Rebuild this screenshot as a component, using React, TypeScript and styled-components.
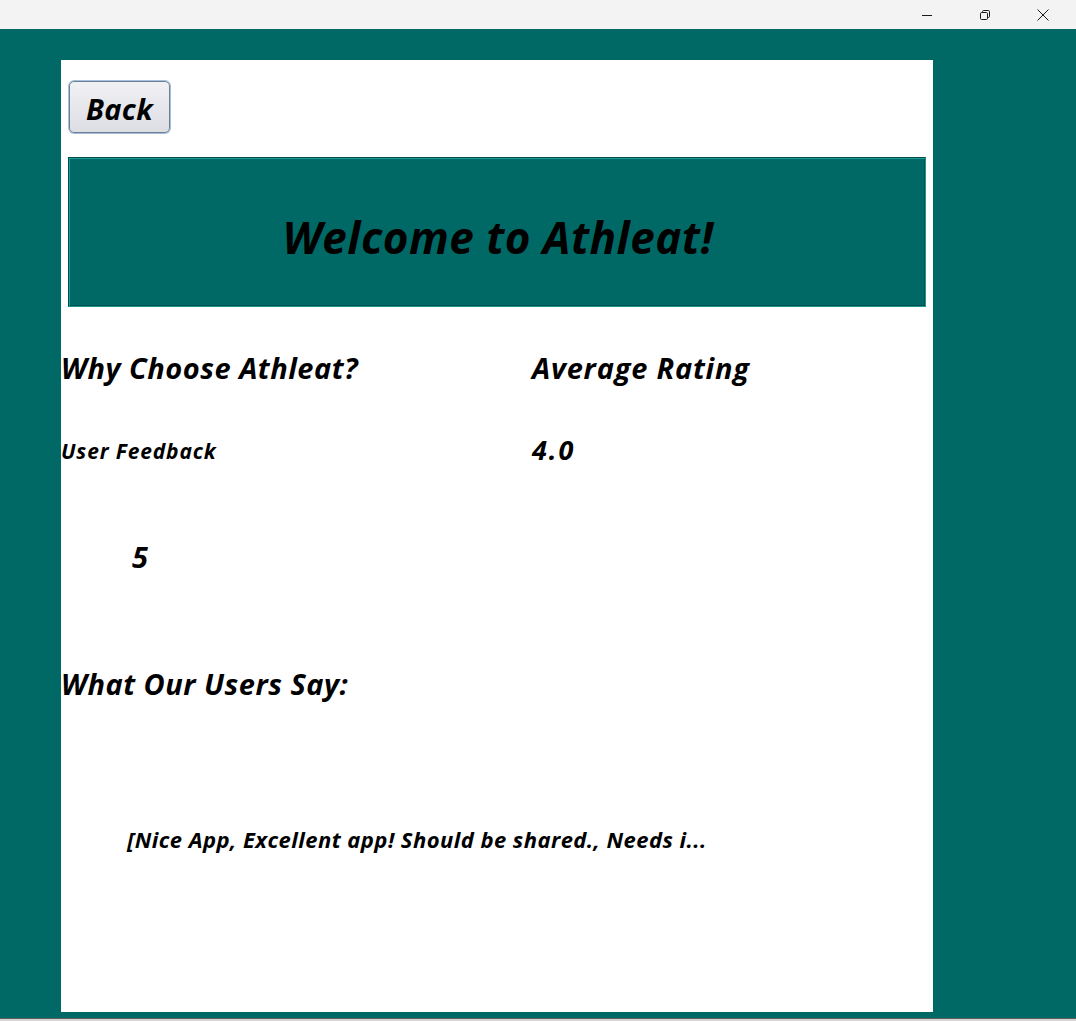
import React from 'react';
import styled, { createGlobalStyle } from 'styled-components';

const teal = '#006966';

const GlobalStyle = createGlobalStyle`
  html, body {
    margin: 0;
    padding: 0;
    background: ${teal};
  }
  body {
    font-family: "Open Sans", "Noto Sans", sans-serif;
  }
`;

const Window = styled.div`
  width: 1076px;
  height: 1021px;
  display: flex;
  flex-direction: column;
  overflow: hidden;
`;

const TitleBar = styled.div`
  height: 29px;
  background: #f3f3f3;
  display: flex;
  justify-content: flex-end;
  padding-right: 4px;
  flex-shrink: 0;
`;

const ControlButton = styled.div`
  width: 58px;
  height: 29px;
  display: flex;
  align-items: center;
  justify-content: center;
  color: #1a1a1a;
`;

const Stage = styled.div`
  height: 990px;
  background: ${teal};
  padding: 31px 0 0 61px;
  box-sizing: border-box;
  border-bottom: 1px solid #5c5c5c;
  flex-shrink: 0;
`;

const Footer = styled.div`
  flex: 1;
  background: #d6d6d6;
`;

const Panel = styled.div`
  width: 872px;
  height: 952px;
  background: #ffffff;
  display: flex;
  flex-direction: column;
  font-style: italic;
  font-weight: 700;
  color: #000;
`;

const BackButton = styled.button`
  margin: 21px 0 0 8px;
  width: 101px;
  height: 52px;
  border-radius: 5px;
  border: 1px solid #6e7f93;
  box-shadow: 0 0 0 1px #a4c0de;
  background: linear-gradient(#f1f1f4, #dddee4);
  font-family: "Open Sans", sans-serif;
  font-style: italic;
  font-weight: 700;
  font-size: 29px;
  letter-spacing: 0.3px;
  line-height: 1;
  color: #000;
  padding: 3px 0 0;
  align-self: flex-start;
`;

const Banner = styled.div`
  margin: 24px 7px 0 7px;
  height: 150px;
  box-sizing: border-box;
  background: ${teal};
  border: 1px solid;
  border-color: #004f4c #1d9a93 #1d9a93 #004f4c;
  box-shadow: inset 1px 1px 0 #1d9a93, inset -1px -1px 0 #004f4c;
  display: flex;
  justify-content: center;
  padding-top: 57px;
`;

const BannerTitle = styled.h1`
  margin: 0 0 0 2px;
  font-size: 44px;
  line-height: 1;
  font-weight: 700;
  letter-spacing: 0.5px;
`;

const Columns = styled.div`
  display: grid;
  grid-template-columns: 471px 1fr;
  margin-top: 46px;
`;

const Column = styled.div`
  display: flex;
  flex-direction: column;
  align-items: flex-start;
`;

const Text = styled.div<{ $size: number; $top?: number; $left?: number; $spacing?: number }>`
  font-size: ${p => p.$size}px;
  line-height: 1;
  margin-top: ${p => p.$top ?? 0}px;
  margin-left: ${p => p.$left ?? 0}px;
  letter-spacing: ${p => p.$spacing ?? 0.5}px;
  white-space: nowrap;
`;

const Minimize = () => (
  <svg width="12" height="12" viewBox="0 0 12 12">
    <path d="M1 6.5h10" stroke="currentColor" strokeWidth="1" />
  </svg>
);

const Restore = () => (
  <svg width="12" height="12" viewBox="0 0 12 12" fill="none" stroke="currentColor" strokeWidth="1">
    <rect x="1.5" y="3.5" width="7" height="7" rx="1.2" />
    <path d="M3.5 3.5V2.7a1.2 1.2 0 0 1 1.2-1.2h4.6a1.2 1.2 0 0 1 1.2 1.2v4.6a1.2 1.2 0 0 1-1.2 1.2h-.8" />
  </svg>
);

const Close = () => (
  <svg width="12" height="12" viewBox="0 0 12 12">
    <path d="M0.5 0.5l11 11M11.5 0.5l-11 11" stroke="currentColor" strokeWidth="1" />
  </svg>
);

const feedback = ['Nice App', 'Excellent app! Should be shared.', 'Needs improvement'];

const App = () => {
  const preview = `[${feedback.join(', ')}]`;
  return (
    <Window>
      <GlobalStyle />
      <TitleBar>
        <ControlButton><Minimize /></ControlButton>
        <ControlButton><Restore /></ControlButton>
        <ControlButton><Close /></ControlButton>
      </TitleBar>
      <Stage>
        <Panel>
          <BackButton>Back</BackButton>
          <Banner>
            <BannerTitle>Welcome to Athleat!</BannerTitle>
          </Banner>
          <Columns>
            <Column>
              <Text $size={29}>Why Choose Athleat?</Text>
              <Text $size={21} $top={59} $spacing={0.85}>User Feedback</Text>
              <Text $size={29} $top={80} $left={71}>5</Text>
            </Column>
            <Column>
              <Text $size={29} $spacing={0.8}>Average Rating</Text>
              <Text $size={27} $top={54} $spacing={2}>4.0</Text>
            </Column>
          </Columns>
          <Text $size={29} $top={98}>What Our Users Say:</Text>
          <Text $size={22} $top={130} $left={66} $spacing={0.45}>{preview.slice(0, 52)}...</Text>
        </Panel>
      </Stage>
      <Footer />
    </Window>
  );
};

export default App;
